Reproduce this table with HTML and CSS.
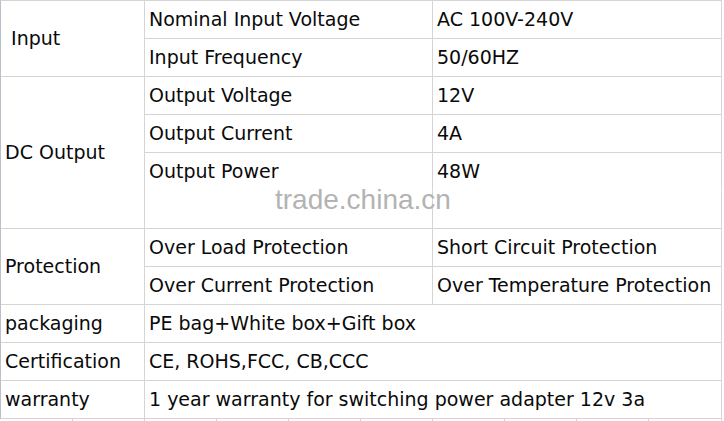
FILE: index.html
```html
<!DOCTYPE html>
<html>
<head>
<meta charset="utf-8">
<link rel="stylesheet" href="styles.css">
</head>
<body>
<div class="sheet">
  <div class="grid">
    <div class="cell head r-input">&nbsp;Input</div>
    <div class="cell">Nominal Input Voltage</div>
    <div class="cell">AC 100V-240V</div>
    <div class="cell">Input Frequency</div>
    <div class="cell">50/60HZ</div>

    <div class="cell head r-dc">DC Output</div>
    <div class="cell">Output Voltage</div>
    <div class="cell">12V</div>
    <div class="cell">Output Current</div>
    <div class="cell">4A</div>
    <div class="cell open">Output Power</div>
    <div class="cell open">48W</div>
    <div class="cell"></div>
    <div class="cell"></div>

    <div class="cell head r-prot">Protection</div>
    <div class="cell">Over Load Protection</div>
    <div class="cell">Short Circuit Protection</div>
    <div class="cell">Over Current Protection</div>
    <div class="cell">Over Temperature Protection</div>

    <div class="cell">packaging</div>
    <div class="cell wide">PE bag+White box+Gift box</div>
    <div class="cell">Certification</div>
    <div class="cell wide">CE, ROHS,FCC, CB,CCC</div>
    <div class="cell">warranty</div>
    <div class="cell wide">1 year warranty for switching power adapter 12v 3a</div>
  </div>
  <div class="strip">
    <span></span><span></span><span></span><span></span><span></span>
    <span></span><span></span><span></span><span></span><span class="last"></span>
  </div>
  <div class="watermark">trade.china.cn</div>
</div>
</body>
</html>
```

FILE: styles.css
```css
html, body {
  margin: 0;
  padding: 0;
  background: #ffffff;
}

.sheet {
  position: relative;
  width: 724px;
  height: 421px;
  overflow: hidden;
  font-family: "DejaVu Sans", Verdana, sans-serif;
  font-size: 19px;
  color: #0a0a0a;
}

.grid {
  display: grid;
  grid-template-columns: 144px 288px 289px;
  grid-auto-rows: 38px;
  border-left: 1px solid #b9c0cc;
  border-top: 1px solid #d4d4d4;
  width: 721px;
}

.cell {
  border-right: 1px solid #d4d4d4;
  border-bottom: 1px solid #d4d4d4;
  padding-left: 4px;
  padding-bottom: 2px;
  display: flex;
  align-items: center;
  white-space: nowrap;
  box-sizing: border-box;
}

.cell.open {
  border-bottom-color: transparent;
}

.head {
  grid-column: 1;
}

.r-input {
  grid-row: 1 / span 2;
}

.r-dc {
  grid-row: 3 / span 4;
}

.r-prot {
  grid-row: 7 / span 2;
}

.wide {
  grid-column: 2 / span 2;
}

.strip {
  display: flex;
  height: 3px;
  margin-left: 1px;
}

.strip span {
  width: 72px;
  border-right: 1px solid #d4d4d4;
  box-sizing: border-box;
}

.strip span.last {
  width: 73px;
}

.watermark {
  position: absolute;
  left: 275px;
  top: 184px;
  font-family: "Liberation Sans", Arial, sans-serif;
  font-size: 28px;
  color: #b3b3b3;
}
```
